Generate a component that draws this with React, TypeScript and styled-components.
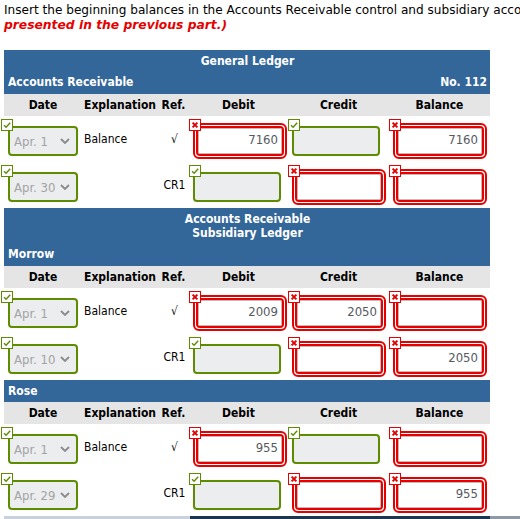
import styled, { createGlobalStyle } from 'styled-components';

const GlobalStyle = createGlobalStyle`
  html, body {
    margin: 0;
    padding: 0;
    background: #ffffff;
    overflow: hidden;
  }
  body {
    font-family: "DejaVu Sans Condensed", Tahoma, "DejaVu Sans", sans-serif;
    color: #000;
  }
`;

type Mark = 'ok' | 'bad';

interface Field {
  mark: Mark;
  value?: string;
}

interface EntryRow {
  date: string;
  explanation?: string;
  ref: string;
  debit: Field;
  credit: Field;
  balance: Field;
}

interface Ledger {
  title?: string[];
  account: string;
  number?: string;
  rows: EntryRow[];
}

const GREEN = '#5e8c00';
const RED = '#e60000';
const BLUE = '#336699';

const ledgers: Ledger[] = [
  {
    title: ['General Ledger'],
    account: 'Accounts Receivable',
    number: 'No. 112',
    rows: [
      {
        date: 'Apr. 1',
        explanation: 'Balance',
        ref: '√',
        debit: { mark: 'bad', value: '7160' },
        credit: { mark: 'ok' },
        balance: { mark: 'bad', value: '7160' }
      },
      {
        date: 'Apr. 30',
        ref: 'CR1',
        debit: { mark: 'ok' },
        credit: { mark: 'bad' },
        balance: { mark: 'bad' }
      }
    ]
  },
  {
    title: ['Accounts Receivable', 'Subsidiary Ledger'],
    account: 'Morrow',
    rows: [
      {
        date: 'Apr. 1',
        explanation: 'Balance',
        ref: '√',
        debit: { mark: 'bad', value: '2009' },
        credit: { mark: 'bad', value: '2050' },
        balance: { mark: 'bad' }
      },
      {
        date: 'Apr. 10',
        ref: 'CR1',
        debit: { mark: 'ok' },
        credit: { mark: 'bad' },
        balance: { mark: 'bad', value: '2050' }
      }
    ]
  },
  {
    account: 'Rose',
    rows: [
      {
        date: 'Apr. 1',
        explanation: 'Balance',
        ref: '√',
        debit: { mark: 'bad', value: '955' },
        credit: { mark: 'ok' },
        balance: { mark: 'bad' }
      },
      {
        date: 'Apr. 29',
        ref: 'CR1',
        debit: { mark: 'ok' },
        credit: { mark: 'bad' },
        balance: { mark: 'bad', value: '955' }
      }
    ]
  }
];

const columns = [
  { label: 'Date', align: 'center' },
  { label: 'Explanation', align: 'left' },
  { label: 'Ref.', align: 'center' },
  { label: 'Debit', align: 'center' },
  { label: 'Credit', align: 'center' },
  { label: 'Balance', align: 'center' }
];

const Badge = ({ mark, $left = 0 }: { mark: Mark; $left?: number }) => (
  <BadgeBox $mark={mark} $left={$left}>
    {mark === 'ok' ? (
      <svg width="10" height="10" viewBox="0 0 10 10">
        <path d="M2 5.2 L4.1 7.2 L8.2 2.8" fill="none" stroke={GREEN} strokeWidth="1.4" />
      </svg>
    ) : (
      <svg width="10" height="10" viewBox="0 0 10 10">
        <path d="M2.6 2.6 L7.4 7.4 M7.4 2.6 L2.6 7.4" fill="none" stroke={RED} strokeWidth="2" />
      </svg>
    )}
  </BadgeBox>
);

const AmountField = ({ field }: { field: Field }) => (
  <FieldCell>
    <Badge mark={field.mark} />
    {field.mark === 'ok' ? (
      <GreenBox />
    ) : (
      <RedFrame>
        <RedInner>
          <Value>{field.value ?? ''}</Value>
        </RedInner>
      </RedFrame>
    )}
  </FieldCell>
);

const App = () => {
  return (
    <Page>
      <GlobalStyle />
      <Instruction>
        Insert the beginning balances in the Accounts Receivable control and subsidiary accounts
      </Instruction>
      <Note>presented in the previous part.)</Note>

      <Table>
        {ledgers.map((ledger) => (
          <section key={ledger.account}>
            <SectionHead $compact={!ledger.title}>
              {ledger.title && (
                <HeadTitle>
                  {ledger.title.map((line) => (
                    <div key={line}>{line}</div>
                  ))}
                </HeadTitle>
              )}
              <AccountLine>
                <span>{ledger.account}</span>
                {ledger.number && <span>{ledger.number}</span>}
              </AccountLine>
            </SectionHead>

            <ColumnHead>
              {columns.map((col) => (
                <HeadCell key={col.label} $align={col.align}>
                  {col.label}
                </HeadCell>
              ))}
            </ColumnHead>

            {ledger.rows.map((row) => (
              <Row key={row.date}>
                <FieldCell>
                  <Badge mark="ok" $left={-3} />
                  <DateSelect>
                    <span>{row.date}</span>
                    <svg width="10" height="6" viewBox="0 0 10 6">
                      <path d="M1 1 L5 5 L9 1" fill="none" stroke="#8a8a8a" strokeWidth="1.8" />
                    </svg>
                  </DateSelect>
                </FieldCell>
                <TextCell>{row.explanation ?? ''}</TextCell>
                <TextCell $center>{row.ref}</TextCell>
                <AmountField field={row.debit} />
                <AmountField field={row.credit} />
                <AmountField field={row.balance} />
              </Row>
            ))}
          </section>
        ))}
      </Table>
      <Scrollbar />
    </Page>
  );
};

const Page = styled.div`
  width: 520px;
  height: 519px;
  overflow: hidden;
  padding: 3px 0 0 4px;
  box-sizing: border-box;
`;

const Instruction = styled.div`
  font-family: "DejaVu Sans", Verdana, sans-serif;
  font-size: 12.1px;
  line-height: 15px;
  white-space: nowrap;
`;

const Note = styled.div`
  font-family: "DejaVu Sans", Verdana, sans-serif;
  font-size: 12.3px;
  line-height: 15px;
  font-weight: bold;
  font-style: italic;
  color: ${RED};
  white-space: nowrap;
`;

const Table = styled.div`
  width: 486px;
  margin-top: 17px;
`;

const SectionHead = styled.div<{ $compact: boolean }>`
  background: ${BLUE};
  color: #ffffff;
  font-size: 12px;
  font-weight: bold;
  line-height: 14px;
  padding: ${(p) => (p.$compact ? '4px 3px 4px 4px' : '4px 3px 5px 4px')};
`;

const HeadTitle = styled.div`
  text-align: center;
  margin-bottom: 7px;
`;

const AccountLine = styled.div`
  display: flex;
  justify-content: space-between;
`;

const grid = `
  display: grid;
  grid-template-columns: 78px 76px 31px 99px 101px 101px;
`;

const ColumnHead = styled.div`
  ${grid}
  background: #e5e5e5;
  height: 22px;
  line-height: 22px;
  font-size: 12px;
  font-weight: bold;
`;

const HeadCell = styled.div<{ $align: string }>`
  text-align: ${(p) => p.$align};
  padding-left: ${(p) => (p.$align === 'left' ? '2px' : '0')};
`;

const Row = styled.div`
  ${grid}
  height: 46px;
`;

const TextCell = styled.div<{ $center?: boolean }>`
  font-size: 12px;
  line-height: 30px;
  padding-top: 8px;
  padding-left: ${(p) => (p.$center ? '2px' : '2px')};
  text-align: ${(p) => (p.$center ? 'center' : 'left')};
`;

const FieldCell = styled.div`
  position: relative;
  padding: 0 0 0 4px;
`;

const BadgeBox = styled.div<{ $mark: Mark; $left: number }>`
  position: absolute;
  top: 3px;
  left: ${(p) => p.$left}px;
  z-index: 2;
  width: 12px;
  height: 12px;
  box-sizing: border-box;
  border: 1px solid ${(p) => (p.$mark === 'ok' ? GREEN : RED)};
  background: #ffffff;
  display: flex;
  align-items: center;
  justify-content: center;
`;

const GreenBox = styled.div`
  margin-top: 10px;
  width: 88px;
  height: 30px;
  box-sizing: border-box;
  border: 2px solid ${GREEN};
  border-radius: 4px;
  background: #ebedef;
`;

const DateSelect = styled(GreenBox)`
  width: 70px;
  display: flex;
  align-items: center;
  justify-content: space-between;
  padding: 0 6px 0 4px;
  font-size: 13px;
  color: #a3a3a3;
`;

const RedFrame = styled.div`
  margin-top: 7px;
  width: 94px;
  height: 36px;
  box-sizing: border-box;
  border: 2px solid ${RED};
  border-radius: 6px;
  padding: 1px;
  background: #ffffff;
`;

const RedInner = styled.div`
  height: 100%;
  box-sizing: border-box;
  border: 2px solid ${RED};
  border-radius: 4px;
  background: #ffffff;
`;

const Value = styled.div`
  height: 100%;
  box-sizing: border-box;
  border: 1px solid #bdbdbd;
  border-radius: 2px;
  text-align: right;
  padding-right: 3px;
  font-size: 13px;
  line-height: 22px;
  color: #555a60;
`;

const Scrollbar = styled.div`
  width: 516px;
  height: 3px;
  background: linear-gradient(
    to right,
    #c9d1dc 0,
    #c9d1dc 186px,
    #1e3550 186px,
    #1e3550 486px,
    #8f9aa6 486px
  );
`;

export default App;
